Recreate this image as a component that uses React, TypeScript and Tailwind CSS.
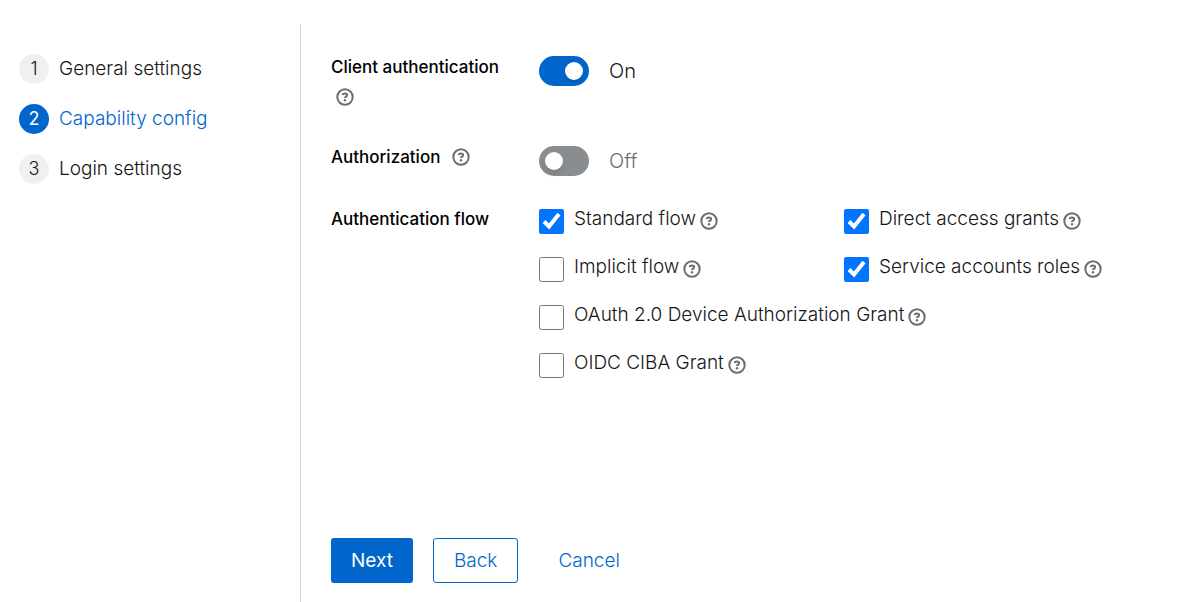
import { useState } from "react";
import type { ReactNode } from "react";

function HelpButton({ label, className = "" }: { label: string; className?: string }) {
  return (
    <button type="button" aria-label={`More help for ${label}`} className={`inline-flex shrink-0 text-[#6a6e73] ${className}`}>
      <svg viewBox="0 0 18 18" className="size-[18px]" fill="none" stroke="currentColor" strokeWidth="2" aria-hidden="true">
        <circle cx="9" cy="9" r="7.7" />
        <path d="M6.5 7.1C6.8 6 7.7 5.5 8.9 5.5c1.4 0 2.3.6 2.3 1.6C11.2 8.6 9 8.5 9 10.1" strokeWidth="2" />
        <circle cx="9" cy="12.2" r="1.2" fill="currentColor" stroke="none" />
      </svg>
    </button>
  );
}

function Step({ number, label, current = false }: { number: number; label: string; current?: boolean }) {
  return (
    <li>
      <a
        href="#"
        aria-current={current ? "step" : undefined}
        className={`flex items-center gap-2.5 text-[19px]/[30px] font-light ${current ? "text-[#0066cc]" : "text-[#151515]"}`}
      >
        <span
          className={`flex size-[30px] shrink-0 items-center justify-center rounded-full text-lg ${
            current ? "bg-[#0066cc] font-normal text-white" : "bg-[#f0f0f0]"
          }`}
        >
          {number}
        </span>
        {label}
      </a>
    </li>
  );
}

function Toggle({ id, checked, onChange }: { id: string; checked: boolean; onChange: (value: boolean) => void }) {
  return (
    <label htmlFor={id} className="flex items-center gap-5 self-start pt-1 text-xl/[30px] font-light">
      <input
        id={id}
        type="checkbox"
        role="switch"
        checked={checked}
        onChange={(event) => onChange(event.target.checked)}
        className="h-[30px] w-[50px] shrink-0 appearance-none rounded-full bg-[#8a8d90] p-1.5 before:block before:size-[18px] before:rounded-full before:bg-white before:shadow-md checked:bg-[#0066cc] checked:before:ml-5"
      />
      <span className={checked ? "text-[#151515]" : "text-[#6a6e73]"}>{checked ? "On" : "Off"}</span>
    </label>
  );
}

function Flow({ id, label, checked = false, wide = false }: { id: string; label: string; checked?: boolean; wide?: boolean }) {
  return (
    <div className={`flex items-center ${wide ? "col-span-2" : ""}`}>
      <input id={id} type="checkbox" defaultChecked={checked} className="mt-1 size-[25px] shrink-0" />
      <label htmlFor={id} className="ml-2.5 text-[19px]/[30px] font-light whitespace-nowrap">
        {label}
      </label>
      <HelpButton label={label} className="mt-1 ml-1" />
    </div>
  );
}

function Row({ label, children }: { label: ReactNode; children: ReactNode }) {
  return (
    <div className="grid grid-cols-[188px_1fr] gap-5">
      <div className="text-[17px]/[30px] font-medium">{label}</div>
      {children}
    </div>
  );
}

export default function App() {
  const [authentication, setAuthentication] = useState(true);
  const [authorization, setAuthorization] = useState(false);

  return (
    <div className="flex min-h-screen bg-white pt-6 font-['Inter',sans-serif] text-[#151515]">
      <nav aria-label="Wizard steps" className="w-[301px] shrink-0 border-r border-[#d2d2d2] pt-[30px] pl-[19px]">
        <ol className="flex flex-col gap-5">
          <Step number={1} label="General settings" />
          <Step number={2} label="Capability config" current />
          <Step number={3} label="Login settings" />
        </ol>
      </nav>
      <form className="flex min-w-0 flex-1 flex-col pr-10 pl-[30px]" onSubmit={(event) => event.preventDefault()}>
        <div className="flex flex-col gap-7 pt-7 text-black">
          <Row
            label={
              <>
                <label htmlFor="client-authentication">Client authentication</label>
                <div className="flex h-8 items-start pt-1.5">
                  <HelpButton label="Client authentication" className="ml-[5px]" />
                </div>
              </>
            }
          >
            <Toggle id="client-authentication" checked={authentication} onChange={setAuthentication} />
          </Row>
          <Row
            label={
              <div className="flex items-center gap-3">
                <label htmlFor="authorization">Authorization</label>
                <HelpButton label="Authorization" />
              </div>
            }
          >
            <Toggle id="authorization" checked={authorization} onChange={setAuthorization} />
          </Row>
          <Row label="Authentication flow">
            <div role="group" aria-label="Authentication flow" className="grid grid-cols-2 gap-y-[18px] text-[#151515]">
              <Flow id="standard" label="Standard flow" checked />
              <Flow id="direct" label="Direct access grants" checked />
              <Flow id="implicit" label="Implicit flow" />
              <Flow id="service" label="Service accounts roles" checked />
              <Flow id="device" label="OAuth 2.0 Device Authorization Grant" wide />
              <Flow id="ciba" label="OIDC CIBA Grant" wide />
            </div>
          </Row>
        </div>
        <div className="mt-auto flex gap-5 pb-[19px] text-[19px]/[30px] font-light text-[#0066cc]">
          <button type="submit" className="h-[45px] rounded-[3px] bg-[#0066cc] px-5 font-normal text-white">
            Next
          </button>
          <button type="button" className="h-[45px] rounded-[3px] border border-[#0066cc] px-5">
            Back
          </button>
          <button type="button" className="h-[45px] px-5">
            Cancel
          </button>
        </div>
      </form>
    </div>
  );
}
